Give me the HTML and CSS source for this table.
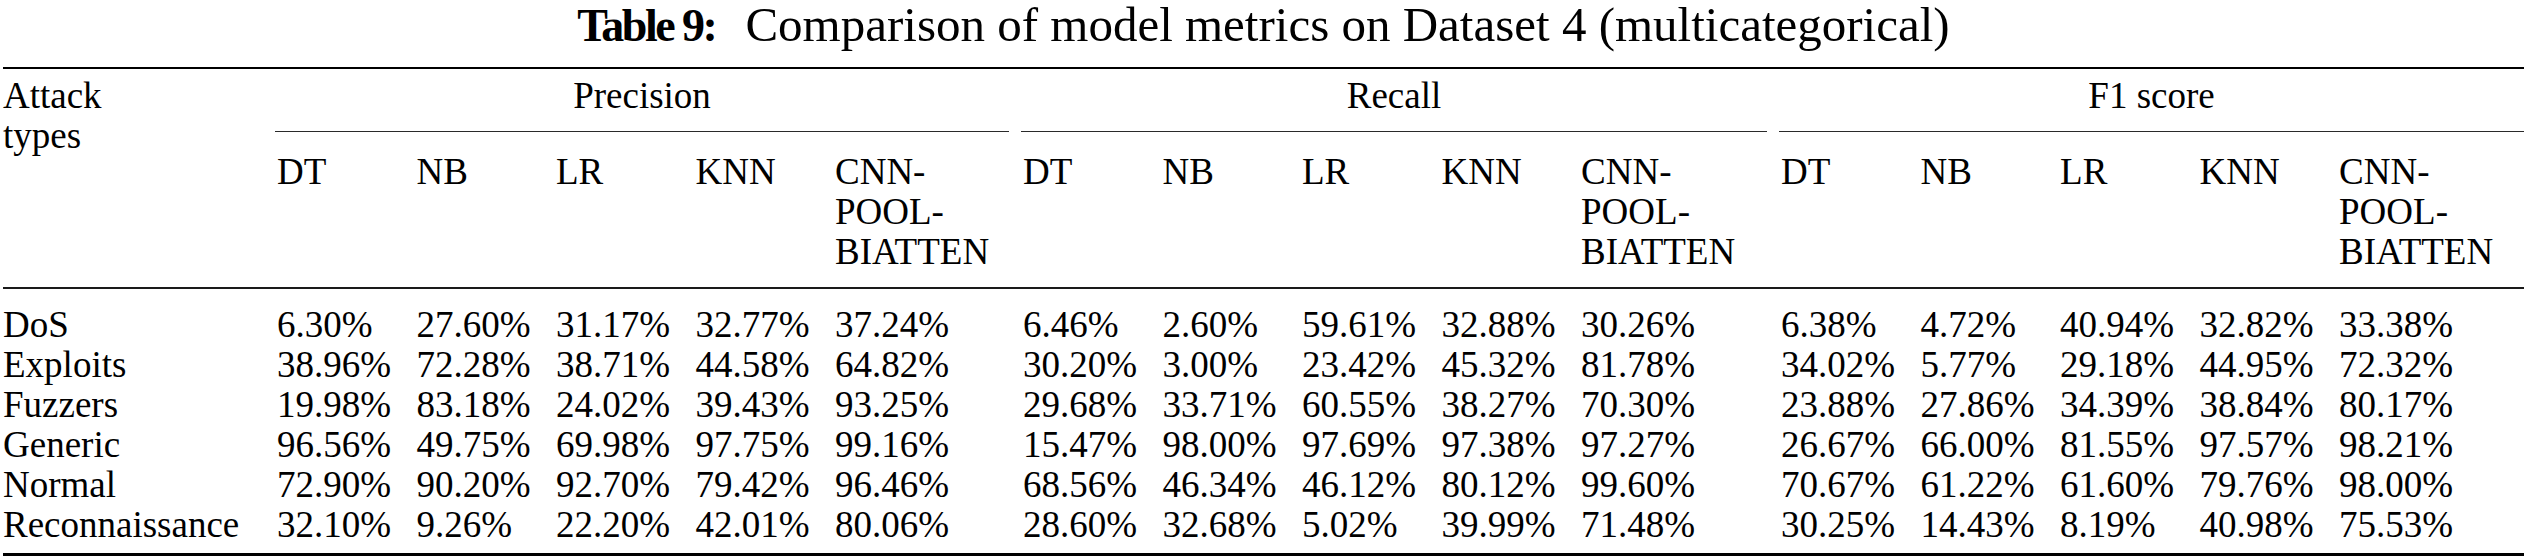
FILE: index.html
```html
<!DOCTYPE html>
<html lang="en">
<head>
<meta charset="utf-8">
<title>Table 9</title>
<link rel="stylesheet" href="styles.css">
</head>
<body>
<div class="page">
  <p class="caption"><strong class="caption-label">Table 9:</strong><span class="caption-text">Comparison of model metrics on Dataset 4 (multicategorical)</span></p>
  <table class="metrics">
    <colgroup>
      <col class="col-type">
      <col class="col-m"><col class="col-m"><col class="col-m"><col class="col-m"><col class="col-cnn-p">
      <col class="col-m"><col class="col-m"><col class="col-m"><col class="col-m"><col class="col-cnn-r">
      <col class="col-m"><col class="col-m"><col class="col-m"><col class="col-m"><col class="col-cnn-f">
    </colgroup>
    <thead>
      <tr class="group-row">
        <th class="type-head" rowspan="2">Attack<br>types</th>
        <th class="group" colspan="5"><div class="cline">Precision</div></th>
        <th class="group" colspan="5"><div class="cline">Recall</div></th>
        <th class="group group-last" colspan="5"><div class="cline">F1 score</div></th>
      </tr>
      <tr class="model-row">
        <th>DT</th><th>NB</th><th>LR</th><th>KNN</th><th>CNN-<br>POOL-<br>BIATTEN</th>
        <th>DT</th><th>NB</th><th>LR</th><th>KNN</th><th>CNN-<br>POOL-<br>BIATTEN</th>
        <th>DT</th><th>NB</th><th>LR</th><th>KNN</th><th>CNN-<br>POOL-<br>BIATTEN</th>
      </tr>
    </thead>
    <tbody>
      <tr><td>DoS</td><td>6.30%</td><td>27.60%</td><td>31.17%</td><td>32.77%</td><td>37.24%</td><td>6.46%</td><td>2.60%</td><td>59.61%</td><td>32.88%</td><td>30.26%</td><td>6.38%</td><td>4.72%</td><td>40.94%</td><td>32.82%</td><td>33.38%</td></tr>
      <tr><td>Exploits</td><td>38.96%</td><td>72.28%</td><td>38.71%</td><td>44.58%</td><td>64.82%</td><td>30.20%</td><td>3.00%</td><td>23.42%</td><td>45.32%</td><td>81.78%</td><td>34.02%</td><td>5.77%</td><td>29.18%</td><td>44.95%</td><td>72.32%</td></tr>
      <tr><td>Fuzzers</td><td>19.98%</td><td>83.18%</td><td>24.02%</td><td>39.43%</td><td>93.25%</td><td>29.68%</td><td>33.71%</td><td>60.55%</td><td>38.27%</td><td>70.30%</td><td>23.88%</td><td>27.86%</td><td>34.39%</td><td>38.84%</td><td>80.17%</td></tr>
      <tr><td>Generic</td><td>96.56%</td><td>49.75%</td><td>69.98%</td><td>97.75%</td><td>99.16%</td><td>15.47%</td><td>98.00%</td><td>97.69%</td><td>97.38%</td><td>97.27%</td><td>26.67%</td><td>66.00%</td><td>81.55%</td><td>97.57%</td><td>98.21%</td></tr>
      <tr><td>Normal</td><td>72.90%</td><td>90.20%</td><td>92.70%</td><td>79.42%</td><td>96.46%</td><td>68.56%</td><td>46.34%</td><td>46.12%</td><td>80.12%</td><td>99.60%</td><td>70.67%</td><td>61.22%</td><td>61.60%</td><td>79.76%</td><td>98.00%</td></tr>
      <tr><td>Reconnaissance</td><td>32.10%</td><td>9.26%</td><td>22.20%</td><td>42.01%</td><td>80.06%</td><td>28.60%</td><td>32.68%</td><td>5.02%</td><td>39.99%</td><td>71.48%</td><td>30.25%</td><td>14.43%</td><td>8.19%</td><td>40.98%</td><td>75.53%</td></tr>
    </tbody>
  </table>
</div>
</body>
</html>
```
FILE: styles.css
```css
html, body {
  margin: 0;
  padding: 0;
  background: #ffffff;
}

.page {
  padding: 0 3px;
  font-family: "Liberation Serif", "Times New Roman", Times, serif;
  color: #000000;
}

.caption {
  margin: 0 0 18px 0;
  height: 49px;
  line-height: 49px;
  font-size: 49px;
  text-align: center;
  white-space: nowrap;
}

.caption-label {
  font-weight: bold;
  font-size: 46px;
  letter-spacing: -2.5px;
  margin-right: 30px;
}

.metrics {
  width: 2521px;
  table-layout: fixed;
  border-collapse: collapse;
  font: 37px/40px "Liberation Serif", "Times New Roman", Times, serif;
  color: #000000;
  border-top: 2px solid #000000;
  border-bottom: 3px solid #000000;
}

.col-type { width: 272px; }
.col-m { width: 139.5px; }
.col-cnn-p { width: 188px; }
.col-cnn-r { width: 200px; }
.col-cnn-f { width: 187px; }

.metrics th,
.metrics td {
  font: 37px/40px "Liberation Serif", "Times New Roman", Times, serif;
  text-align: left;
  vertical-align: top;
  padding: 0 0 0 2px;
  white-space: nowrap;
}

.metrics thead {
  border-bottom: 2px solid #1a1a1a;
}

.metrics .type-head {
  padding-top: 7px;
  padding-left: 0;
}

.group-row .group {
  padding: 7px 0 0 0;
}

.cline {
  text-align: center;
  padding-bottom: 15px;
  margin-right: 12px;
  border-bottom: 1px solid #2a2a2a;
}

.group-last .cline {
  margin-right: 0;
}

.model-row th {
  padding-top: 20px;
  padding-bottom: 15px;
}

.metrics tbody td:first-child {
  padding-left: 0;
}

.metrics tbody tr:first-child td {
  padding-top: 16px;
}

.metrics tbody tr:last-child td {
  padding-bottom: 8px;
}
```
